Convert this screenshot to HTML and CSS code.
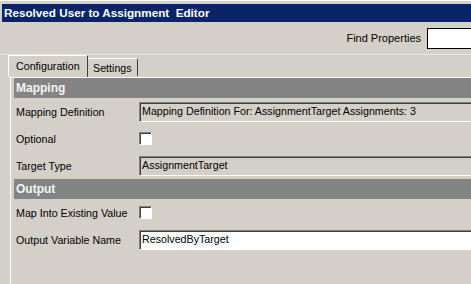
FILE: index.html
```html
<!DOCTYPE html>
<html lang="en">
<head>
    <meta charset="UTF-8">
    <title>Resolved User to Assignment Editor</title>
    <link rel="stylesheet" href="styles.css">
</head>
<body>
    <div class="window">
        <div class="titlebar">Resolved User to Assignment&nbsp; Editor</div>
        <div class="toolbar">
            <label for="find">Find Properties</label>
            <input type="text" id="find" class="find-input">
        </div>
        <div class="tabs">
            <div class="tab active">Configuration</div>
            <div class="tab">Settings</div>
        </div>
        <div class="panel">
            <div class="section">Mapping</div>
            <div class="row">
                <span class="label">Mapping Definition</span>
                <div class="field">Mapping Definition For: AssignmentTarget Assignments: 3</div>
            </div>
            <div class="row">
                <span class="label">Optional</span>
                <span class="check"></span>
            </div>
            <div class="row">
                <span class="label">Target Type</span>
                <div class="field">AssignmentTarget</div>
            </div>
            <div class="section">Output</div>
            <div class="row">
                <span class="label">Map Into Existing Value</span>
                <span class="check"></span>
            </div>
            <div class="row">
                <span class="label">Output Variable Name</span>
                <div class="field white">ResolvedByTarget</div>
            </div>
        </div>
    </div>
</body>
</html>
```

FILE: styles.css
```css
body {
    margin: 0;
    background-color: #d4d0c8;
    font-family: "Liberation Sans", Arial, sans-serif;
    font-size: 10.7px;
    color: #000;
    overflow: hidden;
}

.window {
    height: 284px;
    border-top: 1px solid #ffffff;
    padding-top: 3px;
    padding-left: 2px;
    box-sizing: border-box;
    overflow: hidden;
}

.titlebar {
    height: 18px;
    line-height: 18px;
    background-color: #0a246a;
    color: #fff;
    font-weight: bold;
    font-size: 11.7px;
    padding-left: 2px;
    white-space: nowrap;
}

.toolbar {
    display: flex;
    justify-content: flex-end;
    align-items: center;
    gap: 6px;
    height: 32px;
    border-bottom: 1px solid #e8e6e0;
    margin-left: -2px;
}

.toolbar label {
    font-size: 11px;
}

.find-input {
    width: 44px;
    height: 21px;
    box-sizing: border-box;
    border: 1px solid #000;
    border-right: none;
    background: #fff;
    margin: 0;
    padding: 0;
}

.tabs {
    display: flex;
    align-items: flex-end;
    height: 22px;
    padding-left: 8px;
    margin-left: -2px;
}

.tab {
    height: 18px;
    line-height: 17px;
    padding: 0 5px;
    border-left: 1px solid #ffffff;
    border-top: 1px solid #ffffff;
    border-right: 1px solid #404040;
    box-sizing: border-box;
}

.tab.active {
    height: 22px;
    line-height: 21px;
    padding: 0 7px;
    width: 80px;
}

.tab:not(.active) {
    border-left: none;
    width: 50px;
    margin-bottom: 1px;
    line-height: 18px;
    border-radius: 0 2px 0 0;
}

.panel {
    margin-left: 8px;
    border-left: 1px solid #ffffff;
    border-top: 1px solid #ffffff;
    padding-left: 3px;
    height: 210px;
}

.section {
    height: 20px;
    line-height: 20px;
    background-color: #848484;
    color: #f4f4f4;
    font-weight: bold;
    font-size: 12px;
    padding-left: 2px;
}

.row {
    display: flex;
    align-items: center;
    height: 27px;
}

.label {
    width: 123px;
    padding-left: 2px;
    flex: none;
}

.field {
    flex: 1;
    height: 20px;
    line-height: 17px;
    box-sizing: border-box;
    border-top: 1px solid #808080;
    border-left: 1px solid #808080;
    border-bottom: 1px solid #ffffff;
    box-shadow: inset 1px 1px 0 #404040;
    padding-left: 2px;
    white-space: nowrap;
}

.field.white {
    background-color: #ffffff;
}

.check {
    width: 13px;
    height: 13px;
    box-sizing: border-box;
    background: #fff;
    border-top: 1px solid #808080;
    border-left: 1px solid #808080;
    border-bottom: 1px solid #ffffff;
    border-right: 1px solid #ffffff;
    box-shadow: inset 1px 1px 0 #404040;
}
```
